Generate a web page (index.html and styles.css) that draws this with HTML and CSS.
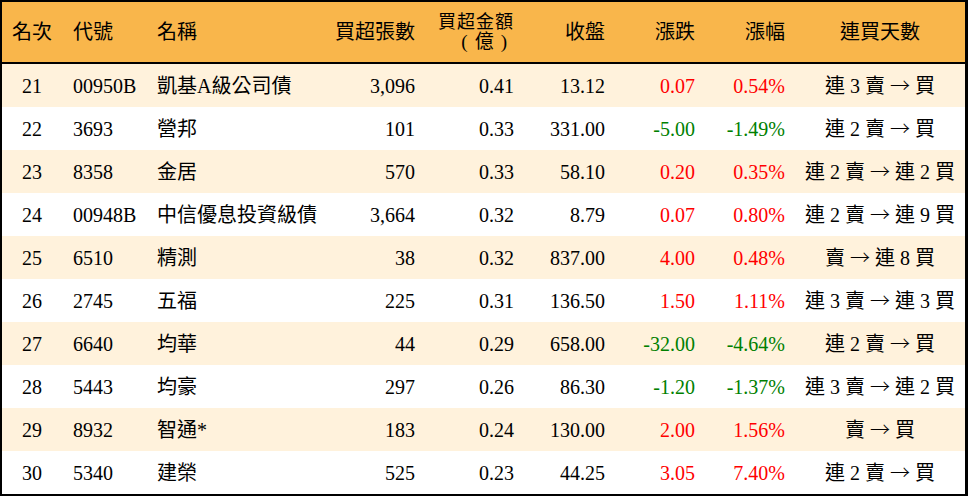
FILE: index.html
```html
<!DOCTYPE html>
<html lang="zh-Hant">
<head>
<meta charset="utf-8">
<link rel="stylesheet" href="styles.css">
</head>
<body>
<div class="board">
<table class="rank">
  <colgroup>
    <col class="c-rank"><col class="c-code"><col class="c-name"><col class="c-vol"><col class="c-amt"><col class="c-close"><col class="c-chg"><col class="c-pct"><col class="c-days">
  </colgroup>
  <thead>
    <tr>
      <th class="ctr">名次</th>
      <th class="lft">代號</th>
      <th class="lft">名稱</th>
      <th class="rgt">買超張數</th>
      <th class="rgt two"><span class="ln">買超金額</span><span class="ln paren">(億)</span></th>
      <th class="rgt">收盤</th>
      <th class="rgt">漲跌</th>
      <th class="rgt">漲幅</th>
      <th class="ctr">連買天數</th>
    </tr>
  </thead>
  <tbody>
    <tr class="alt"><td class="ctr">21</td><td class="lft">00950B</td><td class="lft">凱基A級公司債</td><td class="rgt">3,096</td><td class="rgt">0.41</td><td class="rgt">13.12</td><td class="rgt up">0.07</td><td class="rgt up">0.54%</td><td class="ctr">連 3 賣 <span class="arr">→</span> 買</td></tr>
    <tr><td class="ctr">22</td><td class="lft">3693</td><td class="lft">營邦</td><td class="rgt">101</td><td class="rgt">0.33</td><td class="rgt">331.00</td><td class="rgt dn">-5.00</td><td class="rgt dn">-1.49%</td><td class="ctr">連 2 賣 <span class="arr">→</span> 買</td></tr>
    <tr class="alt"><td class="ctr">23</td><td class="lft">8358</td><td class="lft">金居</td><td class="rgt">570</td><td class="rgt">0.33</td><td class="rgt">58.10</td><td class="rgt up">0.20</td><td class="rgt up">0.35%</td><td class="ctr">連 2 賣 <span class="arr">→</span> 連 2 買</td></tr>
    <tr><td class="ctr">24</td><td class="lft">00948B</td><td class="lft">中信優息投資級債</td><td class="rgt">3,664</td><td class="rgt">0.32</td><td class="rgt">8.79</td><td class="rgt up">0.07</td><td class="rgt up">0.80%</td><td class="ctr">連 2 賣 <span class="arr">→</span> 連 9 買</td></tr>
    <tr class="alt"><td class="ctr">25</td><td class="lft">6510</td><td class="lft">精測</td><td class="rgt">38</td><td class="rgt">0.32</td><td class="rgt">837.00</td><td class="rgt up">4.00</td><td class="rgt up">0.48%</td><td class="ctr">賣 <span class="arr">→</span> 連 8 買</td></tr>
    <tr><td class="ctr">26</td><td class="lft">2745</td><td class="lft">五福</td><td class="rgt">225</td><td class="rgt">0.31</td><td class="rgt">136.50</td><td class="rgt up">1.50</td><td class="rgt up">1.11%</td><td class="ctr">連 3 賣 <span class="arr">→</span> 連 3 買</td></tr>
    <tr class="alt"><td class="ctr">27</td><td class="lft">6640</td><td class="lft">均華</td><td class="rgt">44</td><td class="rgt">0.29</td><td class="rgt">658.00</td><td class="rgt dn">-32.00</td><td class="rgt dn">-4.64%</td><td class="ctr">連 2 賣 <span class="arr">→</span> 買</td></tr>
    <tr><td class="ctr">28</td><td class="lft">5443</td><td class="lft">均豪</td><td class="rgt">297</td><td class="rgt">0.26</td><td class="rgt">86.30</td><td class="rgt dn">-1.20</td><td class="rgt dn">-1.37%</td><td class="ctr">連 3 賣 <span class="arr">→</span> 連 2 買</td></tr>
    <tr class="alt"><td class="ctr">29</td><td class="lft">8932</td><td class="lft">智通*</td><td class="rgt">183</td><td class="rgt">0.24</td><td class="rgt">130.00</td><td class="rgt up">2.00</td><td class="rgt up">1.56%</td><td class="ctr">賣 <span class="arr">→</span> 買</td></tr>
    <tr><td class="ctr">30</td><td class="lft">5340</td><td class="lft">建榮</td><td class="rgt">525</td><td class="rgt">0.23</td><td class="rgt">44.25</td><td class="rgt up">3.05</td><td class="rgt up">7.40%</td><td class="ctr">連 2 賣 <span class="arr">→</span> 買</td></tr>
  </tbody>
</table>
</div>
</body>
</html>
```

FILE: styles.css
```css
html, body {
  margin: 0;
  padding: 0;
  background: #ffffff;
}

.board {
  width: 968px;
  height: 496px;
  box-sizing: border-box;
  border: 2px solid #000000;
  border-right-width: 3px;
  overflow: hidden;
}

.rank {
  width: 963px;
  border-collapse: collapse;
  border-spacing: 0;
  table-layout: fixed;
  font-family: "Liberation Serif", "Noto Sans CJK TC", serif;
  font-size: 20px;
  color: #000000;
}

.c-rank { width: 60px; }
.c-code { width: 84px; }
.c-name { width: 184px; }
.c-vol { width: 95px; }
.c-amt { width: 99px; }
.c-close { width: 91px; }
.c-chg { width: 90px; }
.c-pct { width: 90px; }
.c-days { width: 170px; }

.rank th {
  height: 60px;
  padding: 0;
  background: #f9b64b;
  font-weight: normal;
  line-height: 19px;
  border-bottom: 2px solid #000000;
  vertical-align: middle;
  white-space: nowrap;
}

.rank th .ln {
  display: block;
  height: 19px;
  line-height: 19px;
  font-size: 18px;
  letter-spacing: 1px;
}

.rank th .ln.paren {
  font-size: 19px;
  letter-spacing: 7px;
  margin-right: 0;
}

.rank td {
  height: 43px;
  padding: 0;
  line-height: 22px;
  vertical-align: middle;
  white-space: nowrap;
}

.rank tbody tr.alt td {
  background: #fff2dc;
}

.arr {
  font-family: "Noto Sans CJK TC", sans-serif;
  font-weight: 300;
}

.ctr { text-align: center; }
.lft { text-align: left; padding-left: 11px !important; }
.rgt { text-align: right; padding-right: 10px !important; }

.up { color: #ff0000; }
.dn { color: #008000; }
```
